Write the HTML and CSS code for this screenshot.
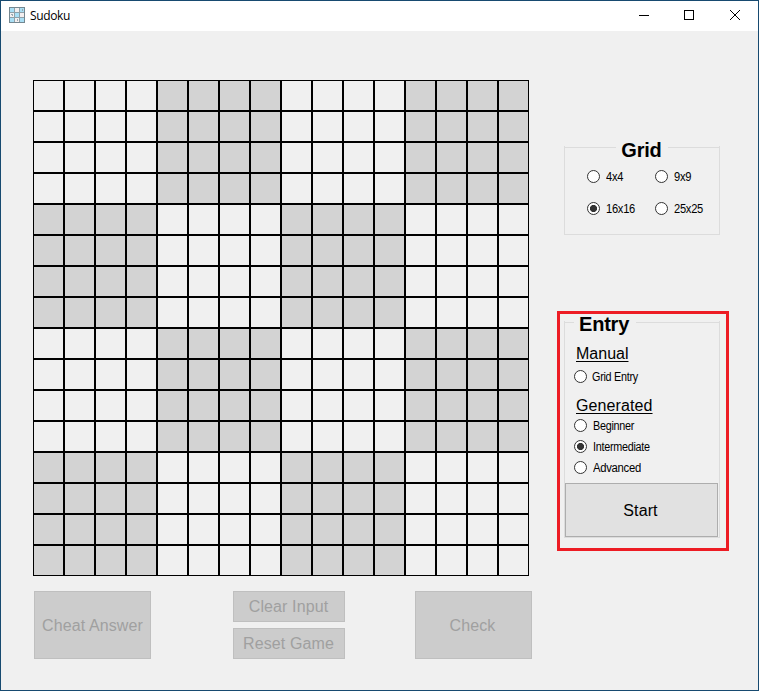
FILE: index.html
```html
<!DOCTYPE html>
<html lang="en">
<head>
<meta charset="utf-8">
<title>Sudoku</title>
<link rel="stylesheet" href="styles.css">
</head>
<body>
<div class="window">
  <header class="titlebar">
    <svg class="app-icon" width="16" height="16" viewBox="0 0 16 16" shape-rendering="crispEdges">
      <path fill="#f3eff0" d="M0 0h16v16H0z"/>
      <path fill="#a9def4" d="M0 0h5v5H0zM11 0h5v5h-5zM6 6h4v4H6zM0 11h5v5H0zM11 11h5v5h-5z"/>
      <path fill="none" stroke="#8fa0a8" d="M5.500 0v16M10.500 0v16M0 5.500h16M0 10.500h16"/>
      <path fill="none" stroke="#748790" d="M.5 .5h15v15H.5z"/>
      <path fill="#9aa9b0" d="M13 2h1v2h-1zM2 7h2v1H2zM3 8h1v1H3zM8 12h1v2H8z"/>
    </svg>
    <h1 class="title">Sudoku</h1>
    <svg class="controls" width="137" height="30" viewBox="0 0 137 30" fill="none" stroke="#000">
      <path d="M18 14.500h10M63.500 9.500h9v9h-9z" shape-rendering="crispEdges"/>
      <path d="M109 9l10 10M119 9l-10 10"/>
    </svg>
  </header>
  <main class="content">
    <section class="play">
      <div class="board" id="board"></div>
      <div class="actions">
        <button class="btn tall" disabled>Cheat Answer</button>
        <div class="stack">
          <button class="btn" disabled>Clear Input</button>
          <button class="btn" disabled>Reset Game</button>
        </div>
        <button class="btn tall check" disabled>Check</button>
      </div>
    </section>
    <aside class="side">
      <section class="group grid-group">
        <div class="legend"><i class="rule"></i><h2>Grid</h2><i class="rule"></i></div>
        <div class="sizes">
          <label class="radio"><input type="radio" name="size"><span>4x4</span></label>
          <label class="radio"><input type="radio" name="size"><span>9x9</span></label>
          <label class="radio"><input type="radio" name="size" checked><span>16x16</span></label>
          <label class="radio"><input type="radio" name="size"><span>25x25</span></label>
        </div>
      </section>
      <div class="highlight">
        <section class="group entry-group">
          <div class="legend"><i class="rule"></i><h2>Entry</h2><i class="rule"></i></div>
          <h3>Manual</h3>
          <label class="radio"><input type="radio" name="entry"><span>Grid Entry</span></label>
          <h3 class="generated">Generated</h3>
          <div class="levels">
            <label class="radio"><input type="radio" name="entry"><span>Beginner</span></label>
            <label class="radio"><input type="radio" name="entry" checked><span>Intermediate</span></label>
            <label class="radio"><input type="radio" name="entry"><span class="advanced">Advanced</span></label>
          </div>
          <button class="btn start">Start</button>
        </section>
      </div>
    </aside>
  </main>
</div>
<script src="board.js"></script>
</body>
</html>
```
FILE: styles.css
```css
* { box-sizing: border-box; }
body { margin: 0; font-family: "Liberation Sans", Arial, sans-serif; color: #000; }
h1, h2, h3 { margin: 0; font-weight: 400; }

.window { width: 759px; height: 691px; border: 1px solid #174a70; background: #f0f0f0; overflow: hidden; }
.titlebar { display: flex; align-items: center; height: 30px; padding-left: 8px; background: #fff; }
.app-icon { margin-top: -2px; }
.title { flex: 1; margin: -1px 0 0 5px; font: 12px/16px "Open Sans", "Noto Sans", sans-serif; letter-spacing: -0.35px; }
.controls { display: block; }

.content { display: flex; padding: 49px 0 0 32px; }
.play { width: 499px; }
.board { display: grid; grid-template-columns: repeat(16, 31px); grid-auto-rows: 31px; }
.cell { border: 1px solid #000; }
.cell.shaded { background: #d3d3d3; }

.actions { display: flex; justify-content: space-between; margin: 15px 0 0 1px; }
.btn { width: 112px; height: 31px; padding: 0 1px 0 0; border: 1px solid #bfbfbf; border-radius: 0; background: #ccc; color: #a0a0a0; font: 16px/18px "Liberation Sans", Arial, sans-serif; letter-spacing: 0.1px; white-space: nowrap; }
.btn.tall { width: 117px; height: 68px; padding: 2px 0 0; }
.btn.check { padding-right: 2px; }
.stack { display: flex; flex-direction: column; gap: 6px; margin-right: 6px; margin-left: 18px; }

.side { padding: 55px 0 0 25px; }
.group { width: 156px; border: 1px solid #dcdcdc; border-top: 0; }
.grid-group { height: 100px; margin-left: 7px; border-image: linear-gradient(transparent 12px, #dcdcdc 12px) 1; }
.legend { display: flex; align-items: center; height: 25px; }
.legend h2 { padding-top: 4px; font-size: 20px; font-weight: 700; line-height: 20px; }
.rule { flex: 1; height: 1px; background: #dcdcdc; }
.grid-group h2 { width: 52px; padding-right: 1px; text-align: center; letter-spacing: -0.2px; }
.sizes { display: grid; grid-template-columns: 68px 68px; row-gap: 18px; padding: 10px 0 0 22px; }

.radio { display: flex; align-items: center; height: 14px; font-size: 12px; line-height: 14px; white-space: nowrap; }
.radio span { margin-left: 6px; letter-spacing: -0.3px; transform: scaleX(0.9); transform-origin: left; }
.sizes .radio span { transform: scaleX(0.93); }
.radio .advanced { transform: scaleX(0.94); }
.radio input { appearance: none; flex: none; width: 13px; height: 13px; margin: -1px 0 0; border: 1px solid #333; border-radius: 50%; background: #fff; }
.radio input:checked { background: radial-gradient(circle, #333 3.200px, #fff 3.900px); }

.highlight { width: 172px; height: 240px; margin-top: 76px; padding: 0 4px; border: 3px solid #ed1c24; }
.entry-group { height: 224px; border-image: linear-gradient(transparent 8px, #dcdcdc 8px) 1; }
.entry-group .legend { height: 17px; }
.entry-group .rule:first-child { flex: 0 0 9px; }
.entry-group h2 { width: 62px; padding-left: 5px; line-height: 17px; letter-spacing: -0.2px; }
.entry-group h3 { height: 18px; margin: 14px 0 0 11px; font-size: 16px; line-height: 18px; text-decoration: underline; text-underline-offset: 2px; text-decoration-thickness: 1px; }
.entry-group .radio { margin-left: 9px; }
.entry-group h3 + .radio { margin-top: 7px; }
.entry-group h3 + .radio span { margin-left: 5px; }
.entry-group h3.generated { margin-top: 13px; letter-spacing: 0.1px; }
.levels { display: flex; flex-direction: column; gap: 7px; margin-top: 4px; }
.btn.start { display: block; width: 153px; height: 54px; margin-top: 8px; padding: 2px 2px 0 0; border-color: #adadad; background: #e1e1e1; color: #000; }
```
FILE: board.js
```javascript
const board = document.getElementById("board");
const size = 16;
const block = 4;
for (let row = 0; row < size; row++) {
  for (let col = 0; col < size; col++) {
    const cell = document.createElement("div");
    const shaded = (Math.floor(row / block) + Math.floor(col / block)) % 2 === 1;
    cell.className = shaded ? "cell shaded" : "cell";
    board.appendChild(cell);
  }
}
```
